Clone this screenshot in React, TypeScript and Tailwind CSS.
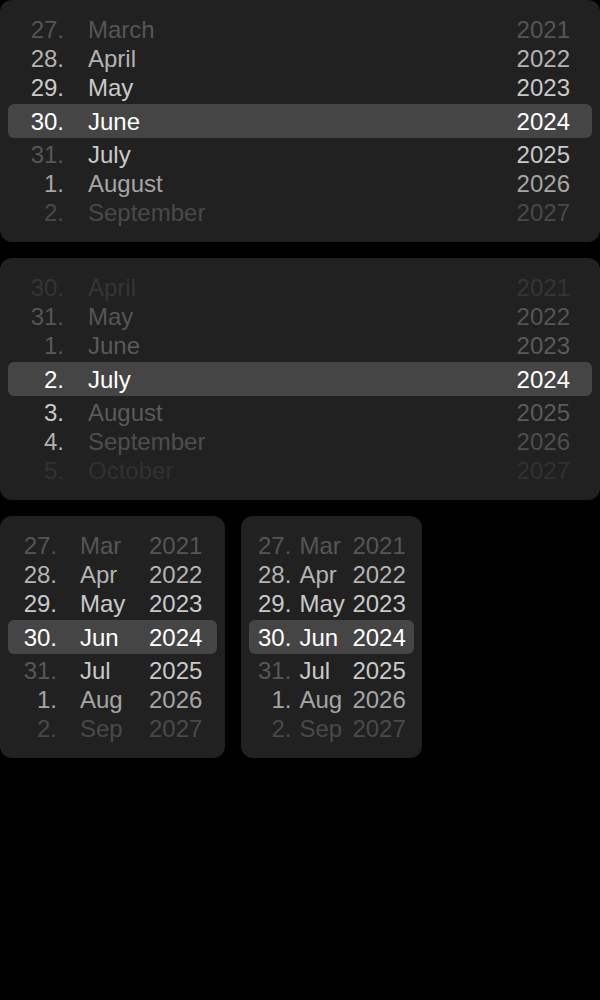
import type { ReactNode } from "react";

// Row colours, top to bottom. Index 3 is the selected row.
const DAY_A = ["text-[#555555]", "text-[#b3b3b3]", "text-[#c9c9c9]", "text-white", "text-[#575757]", "text-[#a5a5a5]", "text-[#494949]"];
const REST_A = ["text-[#555555]", "text-[#b3b3b3]", "text-[#c9c9c9]", "text-white", "text-[#c9c9c9]", "text-[#a5a5a5]", "text-[#494949]"];
const DAY_B = ["text-[#353535]", "text-[#555555]", "text-[#5a5a5a]", "text-white", "text-[#c9c9c9]", "text-[#b0b0b0]", "text-[#333333]"];
const REST_B = ["text-[#353535]", "text-[#555555]", "text-[#5a5a5a]", "text-white", "text-[#5a5a5a]", "text-[#4e4e4e]", "text-[#313131]"];

const YEARS = ["2021", "2022", "2023", "2024", "2025", "2026", "2027"];

interface Column {
  items: string[];
  colors: string[];
  className: string;
}

interface WheelProps {
  columns: Column[];
  rowClass: string;
  className?: string;
}

function Wheel({ columns, rowClass, className = "" }: WheelProps) {
  const rows: ReactNode[] = [];
  for (let i = 0; i < 7; i++) {
    const selected = i === 3;
    rows.push(
      <div
        key={i}
        className={`flex items-center ${rowClass} ${
          selected ? "h-[34px] my-[2px] rounded-md bg-[#454545]" : "h-[29px]"
        }`}
      >
        {columns.map((col, c) => (
          <span key={c} className={`block whitespace-nowrap ${col.className} ${col.colors[i]}`}>
            {col.items[i]}
          </span>
        ))}
      </div>
    );
  }
  return (
    <div
      className={`bg-[#212121] rounded-xl px-2 py-[15px] text-[24px] leading-[29px] font-['Liberation_Sans',Arial,sans-serif] ${className}`}
    >
      {rows}
    </div>
  );
}

export default function App() {
  return (
    <div className="min-h-screen bg-black flex flex-col gap-4">
      <Wheel
        rowClass="px-[22px] gap-6"
        columns={[
          { items: ["27.", "28.", "29.", "30.", "31.", "1.", "2."], colors: DAY_A, className: "w-[34px] text-right" },
          { items: ["March", "April", "May", "June", "July", "August", "September"], colors: REST_A, className: "flex-1" },
          { items: YEARS, colors: REST_A, className: "text-right" },
        ]}
      />
      <Wheel
        rowClass="px-[22px] gap-6"
        columns={[
          { items: ["30.", "31.", "1.", "2.", "3.", "4.", "5."], colors: DAY_B, className: "w-[34px] text-right" },
          { items: ["April", "May", "June", "July", "August", "September", "October"], colors: REST_B, className: "flex-1" },
          { items: YEARS, colors: REST_B, className: "text-right" },
        ]}
      />
      <div className="flex items-start gap-4">
        <Wheel
          rowClass="px-[15px] gap-[23px]"
          columns={[
            { items: ["27.", "28.", "29.", "30.", "31.", "1.", "2."], colors: DAY_A, className: "w-[34px] text-right" },
            { items: ["Mar", "Apr", "May", "Jun", "Jul", "Aug", "Sep"], colors: REST_A, className: "w-[46px]" },
            { items: YEARS, colors: REST_A, className: "text-right" },
          ]}
        />
        <Wheel
          rowClass="px-2 gap-2"
          columns={[
            { items: ["27.", "28.", "29.", "30.", "31.", "1.", "2."], colors: DAY_A, className: "w-[34px] text-right" },
            { items: ["Mar", "Apr", "May", "Jun", "Jul", "Aug", "Sep"], colors: REST_A, className: "w-[45px]" },
            { items: YEARS, colors: REST_A, className: "text-right" },
          ]}
        />
      </div>
    </div>
  );
}
